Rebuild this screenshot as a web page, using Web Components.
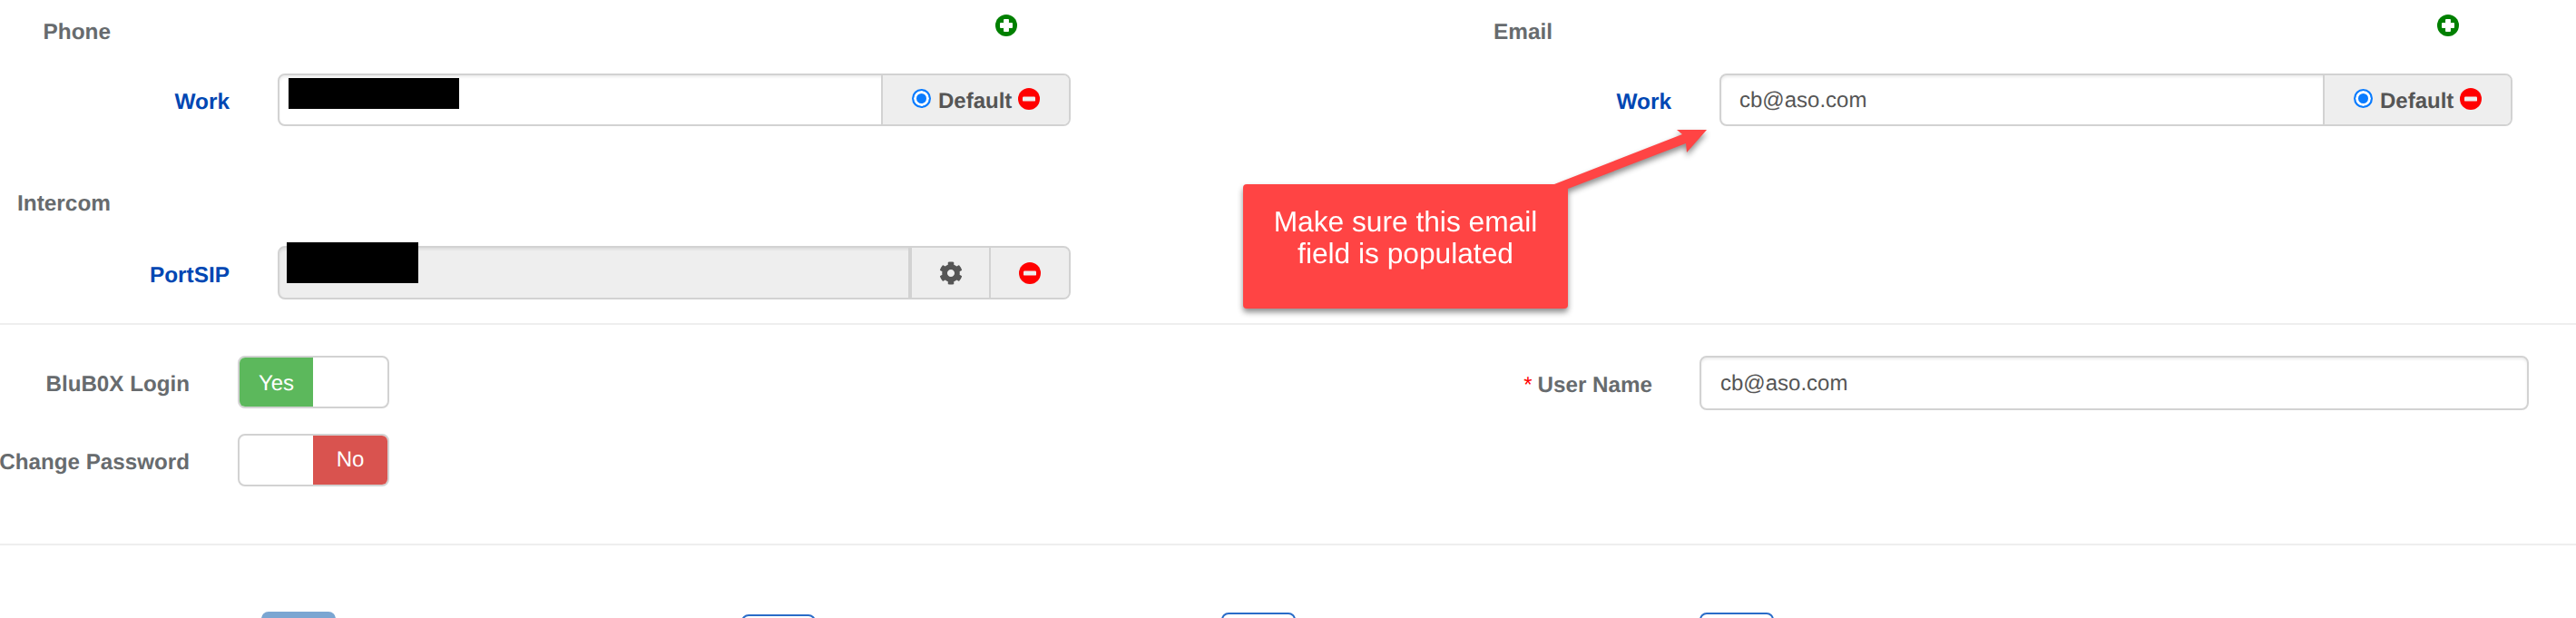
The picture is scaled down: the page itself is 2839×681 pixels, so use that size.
<!DOCTYPE html>
<html lang="en">
<head>
<meta charset="utf-8">
<title>User contact</title>
<style>
	html, body { margin: 0; height: 681px; overflow: hidden; background: #fff; }
	body { font: 24px/1.2 "Liberation Sans", Arial, sans-serif; color: #555; text-rendering: geometricPrecision; }
	.redact { position: absolute; background: #000; }
</style>
</head>
<body>
<user-form></user-form>

<script>
const ICONS = {
	plus: `<svg viewBox="0 0 24 24" width="24" height="24"><circle cx="12" cy="12" r="12" fill="#008000"/><path d="M9.6 5.5h4.8v4.1h4.1v4.8h-4.1v4.1H9.6v-4.1H5.5V9.6h4.1z" fill="#fff" stroke="#fff" stroke-linejoin="round"/></svg>`,
	minus: `<svg viewBox="0 0 24 24" width="24" height="24"><circle cx="12" cy="12" r="12" fill="#f00"/><rect x="5" y="9.4" width="14" height="5.2" rx="1.2" fill="#eee"/></svg>`,
	cog: `<svg viewBox="0 0 512 512" width="26" height="26"><path fill="#555" d="M487.4 315.7l-42.6-24.6c4.3-23.2 4.3-47 0-70.2l42.6-24.6c4.9-2.8 7.1-8.6 5.5-14-11.1-35.6-30-67.8-54.7-94.6-3.8-4.1-10-5.1-14.8-2.3L380.8 110c-17.9-15.4-38.5-27.3-60.8-35.1V25.8c0-5.6-3.9-10.5-9.4-11.7-36.7-8.2-74.3-7.8-109.2 0-5.5 1.2-9.4 6.1-9.4 11.7V75c-22.2 7.9-42.8 19.8-60.8 35.1L88.7 85.5c-4.9-2.8-11-1.9-14.8 2.3-24.7 26.7-43.6 58.9-54.7 94.6-1.7 5.4.6 11.2 5.5 14L67.3 221c-4.3 23.2-4.3 47 0 70.2l-42.6 24.6c-4.9 2.8-7.1 8.6-5.5 14 11.1 35.6 30 67.8 54.7 94.6 3.8 4.1 10 5.1 14.8 2.3l42.6-24.6c17.9 15.4 38.5 27.3 60.8 35.1v49.2c0 5.6 3.9 10.5 9.4 11.7 36.7 8.2 74.3 7.8 109.2 0 5.5-1.2 9.4-6.1 9.4-11.7v-49.2c22.2-7.9 42.8-19.8 60.8-35.1l42.6 24.6c4.9 2.8 11 1.9 14.8-2.3 24.7-26.7 43.6-58.9 54.7-94.6 1.5-5.5-.7-11.3-5.6-14.1zM256 336c-44.1 0-80-35.9-80-80s35.9-80 80-80 80 35.9 80 80-35.9 80-80 80z"/></svg>`,
};

// Heading of a contact group, with the rows of the group slotted below it
class ContactGroup extends HTMLElement {
	constructor() {
		super();
		this.attachShadow({ mode: "open" });
		const showAdd = this.hasAttribute("add");
		this.shadowRoot.innerHTML = `
			<style>
				:host { display: block; }
				.head { display: flex; height: 70px; }
				.title {
					width: 122px;
					line-height: 72px;
					text-align: right;
					font-weight: bold;
					font-size: 24.4px;
					color: #676b6e;
				}
				.add { margin: 16px 0 0 975px; height: 24px; }
			</style>
			<div class="head">
				<div class="title">${this.getAttribute("label")}</div>
				${showAdd ? `<div class="add">${ICONS.plus}</div>` : ""}
			</div>
			<slot></slot>
		`;
	}
}

// Blue type label followed by an input group
class ContactRow extends HTMLElement {
	constructor() {
		super();
		this.attachShadow({ mode: "open" });
		this.shadowRoot.innerHTML = `
			<style>
				:host { display: flex; align-items: center; gap: 53px; }
				.type {
					width: 253px;
					text-align: right;
					font-weight: bold;
					font-size: 24.4px;
					color: #0047b3;
					margin-top: 6px;
				}
			</style>
			<div class="type">${this.getAttribute("label")}</div>
			<slot></slot>
		`;
	}
}

class InputGroup extends HTMLElement {
	constructor() {
		super();
		this.attachShadow({ mode: "open" });
		this.shadowRoot.innerHTML = `
			<style>
				:host {
					display: flex;
					position: relative;
					box-sizing: border-box;
					width: 874px;
					height: 58px;
					border: 2px solid #d2d2d2;
					border-radius: 8px;
					background: #fff;
					box-shadow: inset 0 2px 3px rgba(0,0,0,.075);
				}
				:host([disabled]) { background: #eee; }
				:host([tall]) { height: 59px; }
				.value {
					flex: 1;
					padding: 0 0 0 20px;
					line-height: 56px;
					color: #555;
				}
				.addons { display: flex; }
				::slotted(*) { flex: none; }
			</style>
			<div class="value"><slot name="value"></slot></div>
			<div class="addons"><slot name="addon"></slot></div>
			<slot></slot>
		`;
	}
}

class DefaultAddon extends HTMLElement {
	constructor() {
		super();
		this.attachShadow({ mode: "open" });
		this.shadowRoot.innerHTML = `
			<style>
				:host {
					display: flex;
					align-items: center;
					box-sizing: border-box;
					width: 207px;
					height: 54px;
					padding-left: 32px;
					background: #eee;
					border-left: 2px solid #d2d2d2;
					border-radius: 0 6px 6px 0;
					font-weight: bold;
					color: #555;
				}
				.radio {
					box-sizing: border-box;
					width: 21px;
					height: 21px;
					margin: -4px 8px 0 0;
					border-radius: 50%;
					border: 2px solid #0a7cff;
					background: #0a7cff;
					box-shadow: inset 0 0 0 3px #fff;
				}
				.label { line-height: 54px; margin-top: 4px; }
				.remove { height: 24px; margin: -2px 0 0 7px; }
			</style>
			<div class="radio"></div>
			<div class="label">Default</div>
			<div class="remove">${ICONS.minus}</div>
		`;
	}
}

class IconAddon extends HTMLElement {
	constructor() {
		super();
		this.attachShadow({ mode: "open" });
		const icon = ICONS[this.getAttribute("icon")];
		this.shadowRoot.innerHTML = `
			<style>
				:host {
					display: flex;
					align-items: center;
					justify-content: center;
					box-sizing: border-box;
					width: 88px;
					height: 55px;
					background: #eee;
					border-left: 2px solid #d2d2d2;
				}
				:host([last]) { border-radius: 0 6px 6px 0; }
				:host([heavy]) { border-left-width: 4px; width: 89px; }
				div { height: 26px; display: flex; align-items: center; }
			</style>
			<div>${icon}</div>
		`;
	}
}

class ToggleSwitch extends HTMLElement {
	constructor() {
		super();
		this.attachShadow({ mode: "open" });
		const on = this.getAttribute("value") === "yes";
		this.shadowRoot.innerHTML = `
			<style>
				:host {
					display: flex;
					box-sizing: border-box;
					width: 167px;
					height: 58px;
					border: 2px solid #d2d2d2;
					border-radius: 8px;
					overflow: hidden;
					background: #fff;
				}
				div { text-align: center; color: #fff; flex: none; }
				.yes { width: 81px; background: #5cb85c; line-height: 50px; padding-top: 4px; }
				.no { width: 82px; background: #d9534f; line-height: 50px; padding-top: 2px; }
				.spacer { width: 81px; }
			</style>
			${on ? `<div class="yes">Yes</div>` : `<div class="spacer"></div><div class="no">No</div>`}
		`;
	}
}

class LoginRow extends HTMLElement {
	constructor() {
		super();
		this.attachShadow({ mode: "open" });
		this.shadowRoot.innerHTML = `
			<style>
				:host { display: flex; align-items: center; gap: var(--row-gap, 53px); }
				.name {
					width: var(--name-width, 209px);
					flex: none;
					white-space: nowrap;
					display: flex;
					justify-content: flex-end;
					font-weight: bold;
					font-size: 24.2px;
					color: #676b6e;
					margin-top: 6px;
				}
				.req { color: #f00; margin-right: 6px; font-weight: normal; }
			</style>
			<div class="name">${this.hasAttribute("required") ? `<span class="req">*</span>` : ""}<span>${this.getAttribute("label")}</span></div>
			<slot></slot>
		`;
	}
}

class TextBox extends HTMLElement {
	constructor() {
		super();
		this.attachShadow({ mode: "open" });
		this.shadowRoot.innerHTML = `
			<style>
				:host {
					display: block;
					box-sizing: border-box;
					width: 914px;
					height: 60px;
					padding-left: 21px;
					border: 2px solid #d2d2d2;
					border-radius: 8px;
					line-height: 58px;
					color: #555;
					box-shadow: inset 0 2px 3px rgba(0,0,0,.075);
				}
			</style>
			<slot></slot>
		`;
	}
}

// Red annotation box with its arrow, laid over the form
class CalloutNote extends HTMLElement {
	constructor() {
		super();
		this.attachShadow({ mode: "open" });
		this.shadowRoot.innerHTML = `
			<style>
				:host {
					position: absolute;
					left: 1370px;
					top: 141px;
					width: 511px;
					height: 199px;
					filter: drop-shadow(0 4px 3px rgba(0,0,0,.45));
				}
				svg { position: absolute; left: 0; top: 0; }
				.box {
					position: absolute;
					left: 0;
					top: 62px;
					box-sizing: border-box;
					width: 358px;
					height: 137px;
					padding-top: 24px;
					background: #ff4444;
					border-radius: 4px;
					color: #fff;
					font-size: 31.7px;
					line-height: 35px;
					text-align: center;
				}
			</style>
			<svg width="511" height="80" viewBox="0 0 511 80">
				<polygon fill="#ff4444" points="343,62 484,7 478,2 511,2 489,27 488,17 358,67 358,72 343,72"/>
			</svg>
			<div class="box"><slot></slot></div>
		`;
	}
}

class ActionButton extends HTMLElement {
	constructor() {
		super();
		this.attachShadow({ mode: "open" });
		this.shadowRoot.innerHTML = `
			<style>
				:host {
					display: block;
					box-sizing: border-box;
					width: 82px;
					height: 58px;
					border: 2px solid #2a6cc8;
					border-radius: 8px;
					background: #fff;
				}
				:host([primary]) { background: #7ba6d2; border-color: #7ba6d2; }
			</style>
			<slot></slot>
		`;
	}
}

class UserForm extends HTMLElement {
	constructor() {
		super();
		this.attachShadow({ mode: "open" });
		this.shadowRoot.innerHTML = `
			<style>
				:host { display: block; position: relative; width: 2839px; height: 681px; overflow: hidden; }
				.columns { display: grid; grid-template-columns: 1589px 1250px; }
				.phone-row { margin-top: 11px; }
				.sip-row { margin-top: 12px; }
				.intercom { margin-top: 50px; }
				hr { height: 2px; margin: 0; border: 0; background: #eee; }
				.contacts { padding-bottom: 26px; }
				.login { padding: 34px 0 63px; }
				.stack { display: grid; gap: 28px; justify-items: start; }
				.user-name { --name-width: 232px; --row-gap: 52px; }
				.actions { display: flex; height: 8px; padding: 73px 0 0 288px; gap: 447px; align-items: flex-start; }
				.redact { position: absolute; background: #000; }
				.r1 { left: 10px; top: 3px; width: 188px; height: 34px; }
				.r2 { left: 8px; top: -6px; width: 145px; height: 45px; }
				.offset-2 { margin-top: 3px; }
				.offset-1 { margin-top: 1px; }
				.last { margin-left: -2px; }
			</style>
			<div class="contacts columns">
				<div>
					<contact-group label="Phone" add>
						<contact-row class="phone-row" label="Work">
							<input-group>
								<default-addon slot="addon"></default-addon>
								<div class="redact r1"></div>
							</input-group>
						</contact-row>
					</contact-group>
					<contact-group class="intercom" label="Intercom">
						<contact-row class="sip-row" label="PortSIP">
							<input-group disabled tall>
								<icon-addon slot="addon" icon="cog" heavy></icon-addon>
								<icon-addon slot="addon" icon="minus" last></icon-addon>
								<div class="redact r2"></div>
							</input-group>
						</contact-row>
					</contact-group>
				</div>
				<div>
					<contact-group label="Email" add>
						<contact-row class="phone-row" label="Work">
							<input-group>
								<span slot="value">cb@aso.com</span>
								<default-addon slot="addon"></default-addon>
							</input-group>
						</contact-row>
					</contact-group>
				</div>
			</div>
			<hr>
			<div class="login columns">
				<div class="stack">
					<login-row label="BluB0X Login"><toggle-switch value="yes"></toggle-switch></login-row>
					<login-row label="Change Password"><toggle-switch value="no"></toggle-switch></login-row>
				</div>
				<div>
					<login-row class="user-name" label="User Name" required><text-box>cb@aso.com</text-box></login-row>
				</div>
			</div>
			<hr>
			<div class="actions">
				<action-button primary></action-button>
				<action-button class="offset-2"></action-button>
				<action-button class="offset-1"></action-button>
				<action-button class="offset-1 last"></action-button>
			</div>
			<callout-note>Make sure this email<br>field is populated</callout-note>
		`;
	}
}

customElements.define("contact-group", ContactGroup);
customElements.define("contact-row", ContactRow);
customElements.define("input-group", InputGroup);
customElements.define("default-addon", DefaultAddon);
customElements.define("icon-addon", IconAddon);
customElements.define("toggle-switch", ToggleSwitch);
customElements.define("login-row", LoginRow);
customElements.define("text-box", TextBox);
customElements.define("callout-note", CalloutNote);
customElements.define("action-button", ActionButton);
customElements.define("user-form", UserForm);
</script>
</body>
</html>
